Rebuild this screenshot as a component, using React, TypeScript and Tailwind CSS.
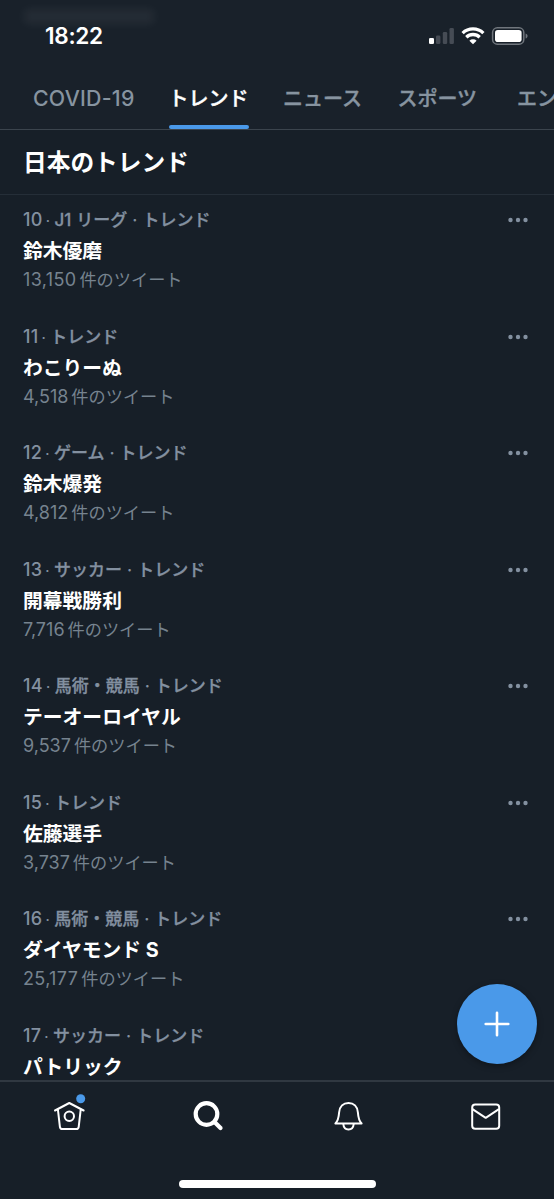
import React from "react";

type Trend = { rank: string; topic: string[]; title: string; count?: string; wide?: boolean };

const trends: Trend[] = [
  { rank: "10", topic: ["J1", "リーグ"], title: "鈴木優磨", count: "13,150", wide: true },
  { rank: "11", topic: [], title: "わこりーぬ", count: "4,518" },
  { rank: "12", topic: ["ゲーム"], title: "鈴木爆発", count: "4,812" },
  { rank: "13", topic: ["サッカー"], title: "開幕戦勝利", count: "7,716" },
  { rank: "14", topic: ["馬術・競馬"], title: "テーオーロイヤル", count: "9,537" },
  { rank: "15", topic: [], title: "佐藤選手", count: "3,737" },
  { rank: "16", topic: ["馬術・競馬"], title: "ダイヤモンド S", count: "25,177", wide: true },
  { rank: "17", topic: ["サッカー"], title: "パトリック" },
];

function StatusBar() {
  return (
    <div className="relative flex h-[70px] shrink-0 items-center justify-between pt-[2px] pl-[45px] pr-[26px]">
      <div className="absolute top-[9px] left-[24px] h-[15px] w-[130px] rounded bg-white/5 blur-[4px]" />
      <span className="relative text-[22.6px] leading-none font-semibold tracking-[-0.3px] text-white">18:22</span>
      <svg className="-mt-[1px]" width="101" height="20" viewBox="0 0 101 20">
        <g transform="translate(1 1)">
          <rect x="1" y="11" width="5" height="6" rx="1.3" fill="#fff" />
          <rect x="8" y="8.5" width="4.4" height="8.5" rx="1.3" fill="#464c55" />
          <rect x="14.8" y="5" width="4.4" height="12" rx="1.3" fill="#464c55" />
          <rect x="21.5" y="1" width="4.4" height="16" rx="1.3" fill="#464c55" />
          <g fill="none" stroke="#fff" strokeWidth="3.3">
            <path d="M34.6 6.1a15 15 0 0 1 20.8 0" />
            <path d="M38.3 10.2a9.700 9.700 0 0 1 13.400 0" />
          </g>
          <path d="M45 17.300l-3.600-3.600a5.100 5.100 0 0 1 7.200 0z" fill="#fff" />
          <rect x="64.6" y="0.8" width="31.2" height="16.4" rx="4.8" fill="none" stroke="#70767d" strokeWidth="1.5" />
          <rect x="67" y="3" width="26.6" height="12" rx="2.8" fill="#fff" />
          <path d="M97.6 6.4c2.6.8 2.6 4.4 0 5.2z" fill="#70767d" />
        </g>
      </svg>
    </div>
  );
}

function Tabs() {
  return (
    <nav className="flex h-[60px] shrink-0 overflow-hidden border-b border-[#3b444d] pl-[33px] text-[20px] font-medium whitespace-nowrap text-[#8794a0]">
      <span className="w-[135.5px] shrink-0 pt-[13px] text-[21.3px] leading-[30px] tracking-[0.25px]">COVID-19</span>
      <span className="mr-[34.5px] flex w-[80px] shrink-0 flex-col justify-between pt-[14px] leading-[30px] text-white">
        <span className="[-webkit-text-stroke:0.4px_currentColor]">トレンド</span>
        <span className="h-1 rounded-full bg-[#4a99e9]" />
      </span>
      <span className="w-[114.5px] shrink-0 pt-[14px] leading-[30px] [-webkit-text-stroke:0.4px_currentColor]">ニュース</span>
      <span className="w-[119.5px] shrink-0 pt-[14px] leading-[30px] [-webkit-text-stroke:0.4px_currentColor]">スポーツ</span>
      <span className="shrink-0 pt-[14px] leading-[30px] [-webkit-text-stroke:0.4px_currentColor]">エン</span>
    </nav>
  );
}

function TrendRow({ rank, topic, title, count, wide }: Trend) {
  return (
    <div className="flex h-[116.5px] shrink-0 justify-between pt-[13px] pr-[26px] pl-[23px]">
      <div className="whitespace-nowrap">
        <div className="flex h-6 items-baseline text-[17px] leading-6 font-medium text-[#8390a0]">
          <span className="text-[18px] tracking-[0.3px]">{rank}</span>
          <span className="mr-[4.5px] ml-[3px] text-[14px]">·</span>
          {topic.map((t) => (
            <span key={t} className="mr-[5px] [-webkit-text-stroke:0.3px_currentColor]">{t}</span>
          ))}
          {topic.length > 0 && <span className="mr-[5px]">·</span>}
          <span className="[-webkit-text-stroke:0.3px_currentColor]">トレンド</span>
        </div>
        <div className="mt-[5px] flex h-[30px] items-center text-[19.8px] font-bold text-white">{title}</div>
        {count && (
          <div className="-mt-[1px] flex h-[27px] items-baseline text-[17.2px] leading-[27px] text-[#76838f]">
            <span className={wide ? "mr-[3px] text-[18px] tracking-[0.35px]" : "mr-[3px] text-[18px]"}>{count}</span>
            <span>件のツイート</span>
          </div>
        )}
      </div>
      <svg className="mt-[9px]" width="20" height="6" viewBox="0 0 20 6" fill="#8390a0">
        <circle cx="2.5" cy="3" r="2.2" />
        <circle cx="10" cy="3" r="2.2" />
        <circle cx="17.5" cy="3" r="2.2" />
      </svg>
    </div>
  );
}

function HomeIcon() {
  return (
    <svg width="36" height="40" viewBox="0 0 36 40" fill="none" stroke="#fff" strokeWidth="2" strokeLinecap="round" strokeLinejoin="round">
      <path d="M4 17.500L18.300 10l14.300 7.500M6.900 16.500l2 17.300c.2 1.700 1 2.200 2.400 2.200h14c1.400 0 2.200-.5 2.400-2.200l2-17.300" />
      <circle cx="18.300" cy="23.200" r="4.700" />
      <circle cx="29.700" cy="5.700" r="4.500" fill="#4a99e9" stroke="none" />
    </svg>
  );
}

function BottomBar() {
  return (
    <footer className="flex h-[119px] shrink-0 flex-col border-t-2 border-[#303841]">
      <div className="flex h-[72px] items-start pt-[11px]">
        <div className="flex flex-1 justify-center"><HomeIcon /></div>
        <div className="flex flex-1 justify-center pt-[7px] pl-[2px]">
          <svg width="32" height="32" viewBox="0 0 32 32" fill="none" stroke="#fff" strokeWidth="4.2" strokeLinecap="round">
            <circle cx="14.5" cy="14" r="10.8" />
            <path d="M23 22.5l5.5 5.5" />
          </svg>
        </div>
        <div className="flex flex-1 justify-center pt-[7px] pl-[2px]">
          <svg width="32" height="32" viewBox="0 0 32 32" fill="none" stroke="#fff" strokeWidth="2" strokeLinejoin="round" strokeLinecap="round">
            <path d="M3.400 23.500h26.200c-2.700-2.700-3.300-5.300-3.700-11C25.500 6.300 21.700 3 16.500 3s-9 3.300-9.400 9.500c-.4 5.700-1 8.300-3.700 11z" />
            <path d="M11.300 24c.3 3.400 2.300 5.500 5.200 5.500s4.900-2.100 5.200-5.500" />
          </svg>
        </div>
        <div className="flex flex-1 justify-center pt-[7px]">
          <svg width="32" height="32" viewBox="0 0 32 32" fill="none" stroke="#fff" strokeWidth="2" strokeLinejoin="round">
            <rect x="3.200" y="4.500" width="27" height="24.200" rx="3" />
            <path d="M3.500 9.200l13.200 8.600 13.200-8.600" />
          </svg>
        </div>
      </div>
      <div className="mt-[26px] ml-[179px] h-2 w-[197px] rounded-full bg-white" />
    </footer>
  );
}

export default function App() {
  return (
    <div className="relative flex h-[1199px] w-[554px] flex-col overflow-hidden bg-[#171f28] font-[Inter,'Noto_Sans_CJK_JP',sans-serif]">
      <div className="flex shrink-0 flex-col bg-[#19212a]">
        <StatusBar />
        <Tabs />
      </div>
      <h1 className="flex h-[65px] shrink-0 items-center border-b border-[#252e38] pt-[2px] pl-[23px] text-[23.7px] font-bold text-white">
        日本のトレンド
      </h1>
      <main className="flex min-h-0 flex-1 flex-col overflow-hidden">
        {trends.map((t) => (
          <TrendRow key={t.rank} {...t} />
        ))}
      </main>
      <BottomBar />
      <button className="absolute top-[984px] left-[457px] flex h-20 w-20 items-center justify-center rounded-full bg-[#4a99e9] shadow-[0_2px_6px_rgba(0,0,0,0.35)]">
        <svg width="26" height="26" viewBox="0 0 26 26" stroke="#fff" strokeWidth="2.600" strokeLinecap="round">
          <path d="M13 1.700v22.600M1.700 13h22.600" />
        </svg>
      </button>
    </div>
  );
}
